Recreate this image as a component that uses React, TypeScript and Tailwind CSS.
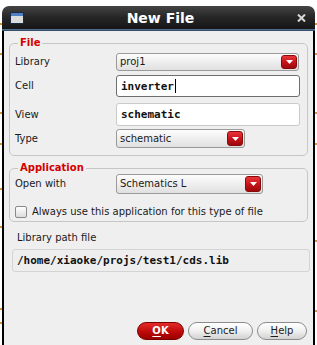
import React from "react";

const sans = "font-['DejaVu_Sans',sans-serif]";
const mono = "font-['DejaVu_Sans_Mono',monospace]";

function DropArrow() {
  return (
    <span className="flex h-full w-[16px] items-center justify-center rounded-[3px] border border-[#8a0a0a] bg-gradient-to-b from-[#e8353a] via-[#c8141a] to-[#9c0a0c]">
      <svg width="7" height="4" viewBox="0 0 7 4">
        <path d="M0 0H7L3.5 4Z" fill="#ffffff" />
      </svg>
    </span>
  );
}

function Combo({ value, className }: { value: string; className: string }) {
  return (
    <div
      className={`flex items-stretch rounded-[3px] border border-[#9a9a9a] bg-gradient-to-b from-[#fdfdfd] to-[#e0e0e0] p-[1px] pl-[3px] ${className}`}
    >
      <span className={`flex flex-1 items-center text-[10px] leading-none text-[#1a1a1a] ${sans}`}>{value}</span>
      <DropArrow />
    </div>
  );
}

function TextField({ value, focused, className }: { value: string; focused?: boolean; className: string }) {
  return (
    <div
      className={`flex items-center rounded-[3px] border bg-white pl-[4px] ${
        focused ? "border-[#6e6e6e]" : "border-[#cacaca]"
      } ${className}`}
    >
      <span className={`text-[11px] font-bold leading-none text-[#111] ${mono}`}>{value}</span>
      {focused && <span className="ml-[1px] h-[14px] w-[1px] bg-black" />}
    </div>
  );
}

function Row({ label, children, className }: { label: string; children: React.ReactNode; className: string }) {
  return (
    <div className={`flex items-center ${className}`}>
      <span className={`w-[101px] text-[10px] leading-none text-[#1a1a1a] ${sans}`}>{label}</span>
      {children}
    </div>
  );
}

function PillButton({ label, primary, className }: { label: string; primary?: boolean; className: string }) {
  const first = label.charAt(0);
  const rest = label.slice(1);
  return (
    <button
      className={`flex h-[18px] items-center justify-center rounded-full border text-[10px] leading-none ${sans} ${
        primary
          ? "border-[#7a0000] bg-gradient-to-b from-[#e42a2a] via-[#c20c0c] to-[#9a0000] font-bold text-white"
          : "border-[#8c8c8c] bg-gradient-to-b from-[#ffffff] via-[#f0f0f0] to-[#d2d2d2] text-[#1a1a1a]"
      } ${className}`}
    >
      <span className="underline underline-offset-2">{first}</span>
      {rest}
    </button>
  );
}

function Tick({ className }: { className: string }) {
  return <span className={`absolute h-[2px] w-[2px] bg-[#d49b2c] ${className}`} />;
}

export default function App() {
  return (
    <div className="relative h-[345px] w-[317px] overflow-hidden bg-white">
      {/* background bits peeking out beside the window */}
      <Tick className="left-0 top-[23px]" />
      <Tick className="left-0 top-[53px]" />
      <Tick className="left-0 top-[112px]" />
      <Tick className="left-0 top-[143px]" />
      <Tick className="left-0 top-[188px]" />
      <Tick className="left-0 top-[226px]" />
      <Tick className="left-0 top-[308px]" />
      <Tick className="left-0 top-[322px]" />
      <Tick className="right-0 top-[23px]" />
      <Tick className="right-0 top-[53px]" />
      <Tick className="right-0 top-[112px]" />
      <Tick className="right-0 top-[143px]" />
      <Tick className="right-0 top-[240px]" />
      <Tick className="right-0 top-[310px]" />

      <div className="ml-[2px] mt-[6px] flex w-[313px] flex-col">
        {/* Title bar */}
        <div className="flex h-[23px] items-center rounded-t-[7px] bg-gradient-to-b from-[#444444] via-[#262626] to-[#161616] px-[8px]">
          <span className="flex h-[12px] w-[14px] flex-col border border-[#1b2a40] bg-[#dcdcdc]">
            <span className="h-[3px] w-full bg-[#4f7fc4]" />
          </span>
          <span className={`flex-1 text-center text-[14px] font-bold leading-none text-white ${sans}`}>New File</span>
          <svg width="9" height="8" viewBox="0 0 9 8" className="mr-[1px]">
            <path d="M1 0.5L8 7.5M8 0.5L1 7.5" stroke="#d8d8d8" strokeWidth="2" />
          </svg>
        </div>
        <div className="h-[2px] bg-gradient-to-b from-[#5c7da6] to-[#2d3e55]" />

        {/* Body */}
        <div className="flex h-[330px] flex-col border-x-2 border-black bg-[#efefef]">
          <fieldset className="mx-[5px] mt-[5px] rounded-[5px] border border-[#c6c6c6] pb-[7px] pl-[5px] pr-[7px]">
            <legend className={`ml-[3px] px-[2px] text-[10px] font-bold leading-[14px] text-[#d40000] ${sans}`}>File</legend>
            <Row label="Library" className="mt-[3px]">
              <Combo value="proj1" className="h-[18px] w-[183px]" />
            </Row>
            <Row label="Cell" className="mt-[4px]">
              <TextField value="inverter" focused className="h-[22px] w-[184px]" />
            </Row>
            <Row label="View" className="mt-[6px]">
              <TextField value="schematic" className="h-[23px] w-[184px]" />
            </Row>
            <Row label="Type" className="mt-[3px]">
              <Combo value="schematic" className="h-[19px] w-[129px]" />
            </Row>
          </fieldset>

          <fieldset className="mx-[5px] mt-[6px] rounded-[5px] border border-[#c6c6c6] pb-[3px] pl-[5px] pr-[7px]">
            <legend className={`ml-[3px] px-[2px] text-[10px] font-bold leading-[12px] text-[#d40000] ${sans}`}>
              Application
            </legend>
            <Row label="Open with" className="">
              <Combo value="Schematics L" className="h-[20px] w-[147px]" />
            </Row>
            <div className="mt-[12px] flex items-center gap-[5px]">
              <span className="h-[12px] w-[12px] rounded-[2px] border border-[#8a8a8a] bg-gradient-to-b from-[#ffffff] to-[#dcdcdc]" />
              <span className={`text-[10px] leading-none text-[#1a1a1a] ${sans}`}>
                Always use this application for this type of file
              </span>
            </div>
          </fieldset>

          <div className={`ml-[13px] mt-[9px] text-[10px] leading-[14px] text-[#1a1a1a] ${sans}`}>Library path file</div>
          <div className="ml-[8px] mr-[3px] mt-[4px] flex h-[23px] items-center rounded-[3px] border border-[#d4d4d4] bg-[#eeeeee] pl-[4px]">
            <span className={`text-[11px] font-bold leading-none text-[#111] ${mono}`}>/home/xiaoke/projs/test1/cds.lib</span>
          </div>

          <div className="mr-[6px] mt-[50px] flex justify-end gap-[4px]">
            <PillButton label="OK" primary className="w-[47px]" />
            <PillButton label="Cancel" className="w-[65px]" />
            <PillButton label="Help" className="w-[50px]" />
          </div>
        </div>
      </div>
    </div>
  );
}
